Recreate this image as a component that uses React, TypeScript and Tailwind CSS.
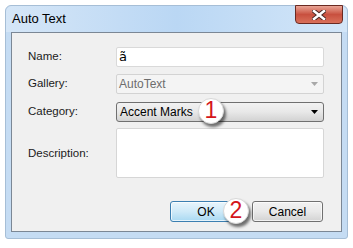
import React from 'react';

const Arrow = ({ color }: { color: string }) => (
  <svg width="7" height="4" viewBox="0 0 7 4" className="shrink-0">
    <path d="M0 0 L7 0 L3.5 4 Z" fill={color} />
  </svg>
);

const Badge = ({ n, className }: { n: string; className: string }) => (
  <div
    className={`absolute w-[26px] h-[26px] rounded-full bg-white border border-[#d8d8d8] shadow-[2px_3px_3px_rgba(0,0,0,0.55)] flex items-center justify-center text-[23px] leading-none text-[#d4161a] ${className}`}
  >
    <span className="-mt-px">{n}</span>
  </div>
);

const App = () => {
  return (
    <div className="relative w-[353px] h-[248px] bg-white pt-[5px] pl-[5px] font-['Liberation_Sans',Arial,sans-serif]">
      <div className="w-[343px] h-[234px] flex flex-col rounded-t-[6px] rounded-b-[3px] border border-[#a6bed6] bg-[#c5dcf3]">
        {/* title bar */}
        <div className="h-[26px] flex items-start justify-between rounded-t-[6px] bg-gradient-to-r from-[#d5e6f7] via-[#bad7f4] to-[#d3e6f8]">
          <span className="pl-[6px] pt-[5px] text-[13px] leading-[15px] text-black">Auto Text</span>
          <div className="-mt-px mr-[4px] w-[48px] h-[19px] rounded-b-[4px] border border-[#6a2a22] bg-gradient-to-b from-[#e9a597] via-[#c8503f] to-[#d9705a] flex items-center justify-center">
            <svg width="14" height="10" viewBox="0 0 14 10">
              <path d="M2 1 L12 9 M12 1 L2 9" stroke="#4a2a26" strokeWidth="4.5" strokeLinecap="square" />
              <path d="M2 1 L12 9 M12 1 L2 9" stroke="#ffffff" strokeWidth="2.5" strokeLinecap="square" />
            </svg>
          </div>
        </div>

        {/* client area */}
        <div className="mx-[5px] h-[200px] border border-[#7b8795] bg-[#f0f0f0] pt-[14px] pl-[16px] pr-[17px] text-[11.5px] text-[#1b1b1b]">
          <div className="flex items-center h-[20px]">
            <span className="w-[88px]">Name:</span>
            <div className="flex-1 h-full bg-white border border-[#d9d9d9] rounded-[2px] flex items-center pl-[2px] text-[13px] text-black font-['DejaVu_Sans',sans-serif]">
              ã
            </div>
          </div>

          <div className="flex items-center h-[20px] mt-[7px]">
            <span className="w-[88px]">Gallery:</span>
            <div className="flex-1 h-full bg-[#f4f4f4] border border-[#d3d3d3] rounded-[2px] flex items-center justify-between pl-[2px] pr-[5px] text-[12px] text-[#6d6d6d]">
              <span>AutoText</span>
              <Arrow color="#a8a8a8" />
            </div>
          </div>

          <div className="flex items-center h-[20px] mt-[8px]">
            <span className="w-[88px]">Category:</span>
            <div className="flex-1 h-full border border-[#707070] rounded-[3px] bg-gradient-to-b from-[#f2f2f2] via-[#e8e8e8] to-[#d2d2d2] flex items-center justify-between pl-[3px] pr-[5px] text-[12px] text-black">
              <span>Accent Marks</span>
              <Arrow color="#000000" />
            </div>
          </div>

          <div className="flex items-start h-[50px] mt-[6px]">
            <span className="w-[88px] pt-[17px]">Description:</span>
            <div className="flex-1 h-full bg-white border border-[#d6d6d6] rounded-[2px]" />
          </div>

          <div className="flex justify-end gap-[10px] h-[21px] mt-[23px] pr-px">
            <div className="w-[72px] h-full rounded-[3px] border border-[#3c7fb1] bg-gradient-to-b from-[#e8f5fc] via-[#cfeaf8] to-[#a9d9f2] shadow-[inset_0_0_0_1px_rgba(255,255,255,0.7)] flex items-center justify-center text-[12px] text-black">
              OK
            </div>
            <div className="w-[71px] h-full rounded-[3px] border border-[#707070] bg-gradient-to-b from-[#f2f2f2] via-[#e9e9e9] to-[#d3d3d3] shadow-[inset_0_0_0_1px_rgba(255,255,255,0.7)] flex items-center justify-center text-[12px] text-black">
              Cancel
            </div>
          </div>
        </div>
      </div>

      <Badge n="1" className="left-[198px] top-[98px]" />
      <Badge n="2" className="left-[223px] top-[198px]" />
    </div>
  );
};

export default App;
